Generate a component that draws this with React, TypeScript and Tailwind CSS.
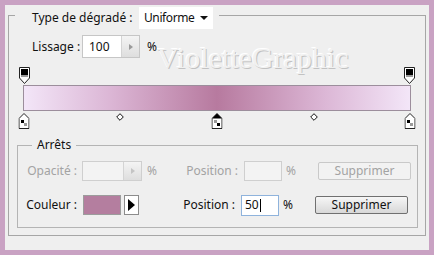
import React from 'react'

const font = { fontFamily: '"Noto Sans", "Open Sans", sans-serif' }

const TopStop = () => (
  <svg width="11" height="17" viewBox="0 0 11 17">
    <path d="M0.5 0.5 H10.5 V11 L5.5 16.5 L0.5 11 Z" fill="#fff" stroke="#222" />
    <rect x="2" y="2" width="7" height="6" fill="#000" />
    <rect x="2" y="8" width="7" height="2" fill="#9a9a9a" />
  </svg>
)

const BottomStop = ({ selected }: { selected?: boolean }) => (
  <svg width="11" height="16" viewBox="0 0 11 16">
    <path d="M0.5 15.5 V5.5 L5.5 0.5 L10.5 5.5 V15.5 Z" fill="#fff" stroke="#222" />
    {selected && <path d="M0.5 5.5 L5.5 0.5 L10.5 5.5 Z" fill="#000" />}
    <rect x="2.5" y="7" width="3" height="3" fill={selected ? '#9a9a9a' : '#000'} />
    <rect x="5.5" y="10" width="3" height="3" fill={selected ? '#000' : '#9a9a9a'} />
  </svg>
)

const Diamond = () => (
  <svg width="8" height="8" viewBox="0 0 8 8">
    <path d="M4 0.7 L7.3 4 L4 7.3 L0.7 4 Z" fill="#fff" stroke="#111" />
  </svg>
)

const Stepper = ({ disabled }: { disabled?: boolean }) => (
  <div className="flex h-full w-[18px] items-center justify-center border-l border-[#d4d4d4] bg-gradient-to-b from-[#f4f4f4] to-[#dedede]">
    <div
      className={
        'h-0 w-0 border-y-[3px] border-l-[4px] border-y-transparent ' +
        (disabled ? 'border-l-[#c4c4c4]' : 'border-l-[#9a9a9a]')
      }
    />
  </div>
)

export default function App() {
  const bottomStops = [
    { id: 'a', pos: 0 },
    { id: 'b', pos: 50, selected: true },
    { id: 'c', pos: 100 },
  ]
  const midpoints = [25, 75]

  return (
    <div className="h-[255px] w-[434px] bg-[#c9a2c3] p-[5px] text-[12px] text-[#111]" style={font}>
      <div className="relative h-full w-full overflow-hidden bg-[#efefef] pl-[3px] pt-[10px]">
        {/* Watermark */}
        <div
          className="pointer-events-none absolute left-[152px] top-[38px] text-[30px] leading-none text-[#f1f1f1] [text-shadow:1px_1px_0_#c2c2c2,-1px_-1px_0_#ffffff]"
          style={{ fontFamily: '"Liberation Serif", "DejaVu Serif", serif' }}
        >
          VioletteGraphic
        </div>

        {/* Main group box */}
        <div className="h-[221px] w-[418px] border border-[#a6a6a6]">
          <div className="-mt-[9px] ml-[6px] flex h-[22px] w-fit items-center bg-[#efefef] pl-[17px] pr-[6px]">
            <span className="w-[107px]">Type de dégradé :</span>
            <div className="flex h-[22px] w-[74px] items-center justify-between bg-white pl-[5px] pr-[5px]">
              <span className="tracking-[-0.4px]">Uniforme</span>
              <div className="h-0 w-0 border-x-[4px] border-t-[4px] border-x-transparent border-t-[#111]" />
            </div>
          </div>

          <div className="relative mt-[6px] flex h-[23px] items-center pl-[23px]">
            <span className="w-[50px]">Lissage :</span>
            <div className="flex h-[23px] w-[58px] items-center justify-between border border-[#c6c6c6] bg-white pl-[6px]">
              <span>100</span>
              <Stepper />
            </div>
            <span className="ml-[7px]">%</span>
          </div>

          {/* Gradient editor */}
          <div className="relative ml-[14px] mt-[9px] w-[388px]">
            <div className="relative h-[18px]">
              <div className="absolute -left-[4px] top-0"><TopStop /></div>
              <div className="absolute -right-[4px] top-0"><TopStop /></div>
            </div>
            <div className="h-[26px] w-full border border-[#9c8e9c] bg-[linear-gradient(to_right,#f3e6f8_0%,#dcb7d6_22%,#b77a9f_50%,#dcb7d6_78%,#f3e6f8_100%)]" />
            <div className="relative h-[17px]">
              {bottomStops.map((s) => (
                <div
                  key={s.id}
                  className="absolute top-[2px] -translate-x-1/2"
                  style={{ left: `calc(${s.pos}% + ${s.pos === 0 ? 1 : s.pos === 100 ? -1 : 0}px)` }}
                >
                  <BottomStop selected={s.selected} />
                </div>
              ))}
              {midpoints.map((m) => (
                <div key={m} className="absolute top-[2px] -translate-x-1/2" style={{ left: `${m}%` }}>
                  <Diamond />
                </div>
              ))}
            </div>
          </div>

          {/* Arrêts */}
          <div className="ml-[8px] mt-[17px] h-[83px] w-[401px] border border-[#b4b4b4]">
            <div className="-mt-[9px] ml-[14px] w-fit bg-[#efefef] px-[5px] leading-[16px]">Arrêts</div>

            <div className="mt-[8px] flex h-[20px] items-center text-[#a3a3a3]">
              <span className="w-[59px] text-right">Opacité :</span>
              <div className="ml-[5px] flex h-[20px] w-[60px] justify-end border border-[#cfcfcf] bg-[#f3f3f3]">
                <Stepper disabled />
              </div>
              <span className="w-[42px] pl-[5px]">%</span>
              <span className="w-[54px] text-right">Position :</span>
              <div className="ml-[6px] h-[20px] w-[38px] border border-[#cfcfcf] bg-[#f3f3f3]" />
              <span className="w-[36px] pl-[4px]">%</span>
              <div className="flex h-[18px] w-[93px] items-center justify-center rounded-[2px] border border-[#c9c9c9] bg-[#f2f2f2]">
                Supprimer
              </div>
            </div>

            <div className="mt-[14px] flex h-[20px] items-center">
              <span className="w-[59px] text-right">Couleur :</span>
              <div className="ml-[6px] h-[20px] w-[38px] border border-[#9c9c9c] bg-[#b47e9f]" />
              <div className="ml-[3px] flex h-[20px] w-[15px] items-center justify-center border border-[#8c8c8c] bg-white">
                <div className="h-0 w-0 border-y-[6px] border-l-[7px] border-y-transparent border-l-black" />
              </div>
              <span className="w-[42px]" />
              <span className="w-[54px] text-right">Position :</span>
              <div className="ml-[6px] flex h-[21px] w-[38px] items-center border border-[#8fb3dc] bg-white pl-[3px]">
                <span>50</span>
                <span className="ml-[1px] h-[13px] w-px bg-black" />
              </div>
              <span className="w-[36px] pl-[4px]">%</span>
              <div className="flex h-[18px] w-[93px] items-center justify-center rounded-[2px] border border-[#707070] bg-gradient-to-b from-[#f6f6f6] to-[#d8d8d8]">
                Supprimer
              </div>
            </div>
          </div>
        </div>
      </div>
    </div>
  )
}
